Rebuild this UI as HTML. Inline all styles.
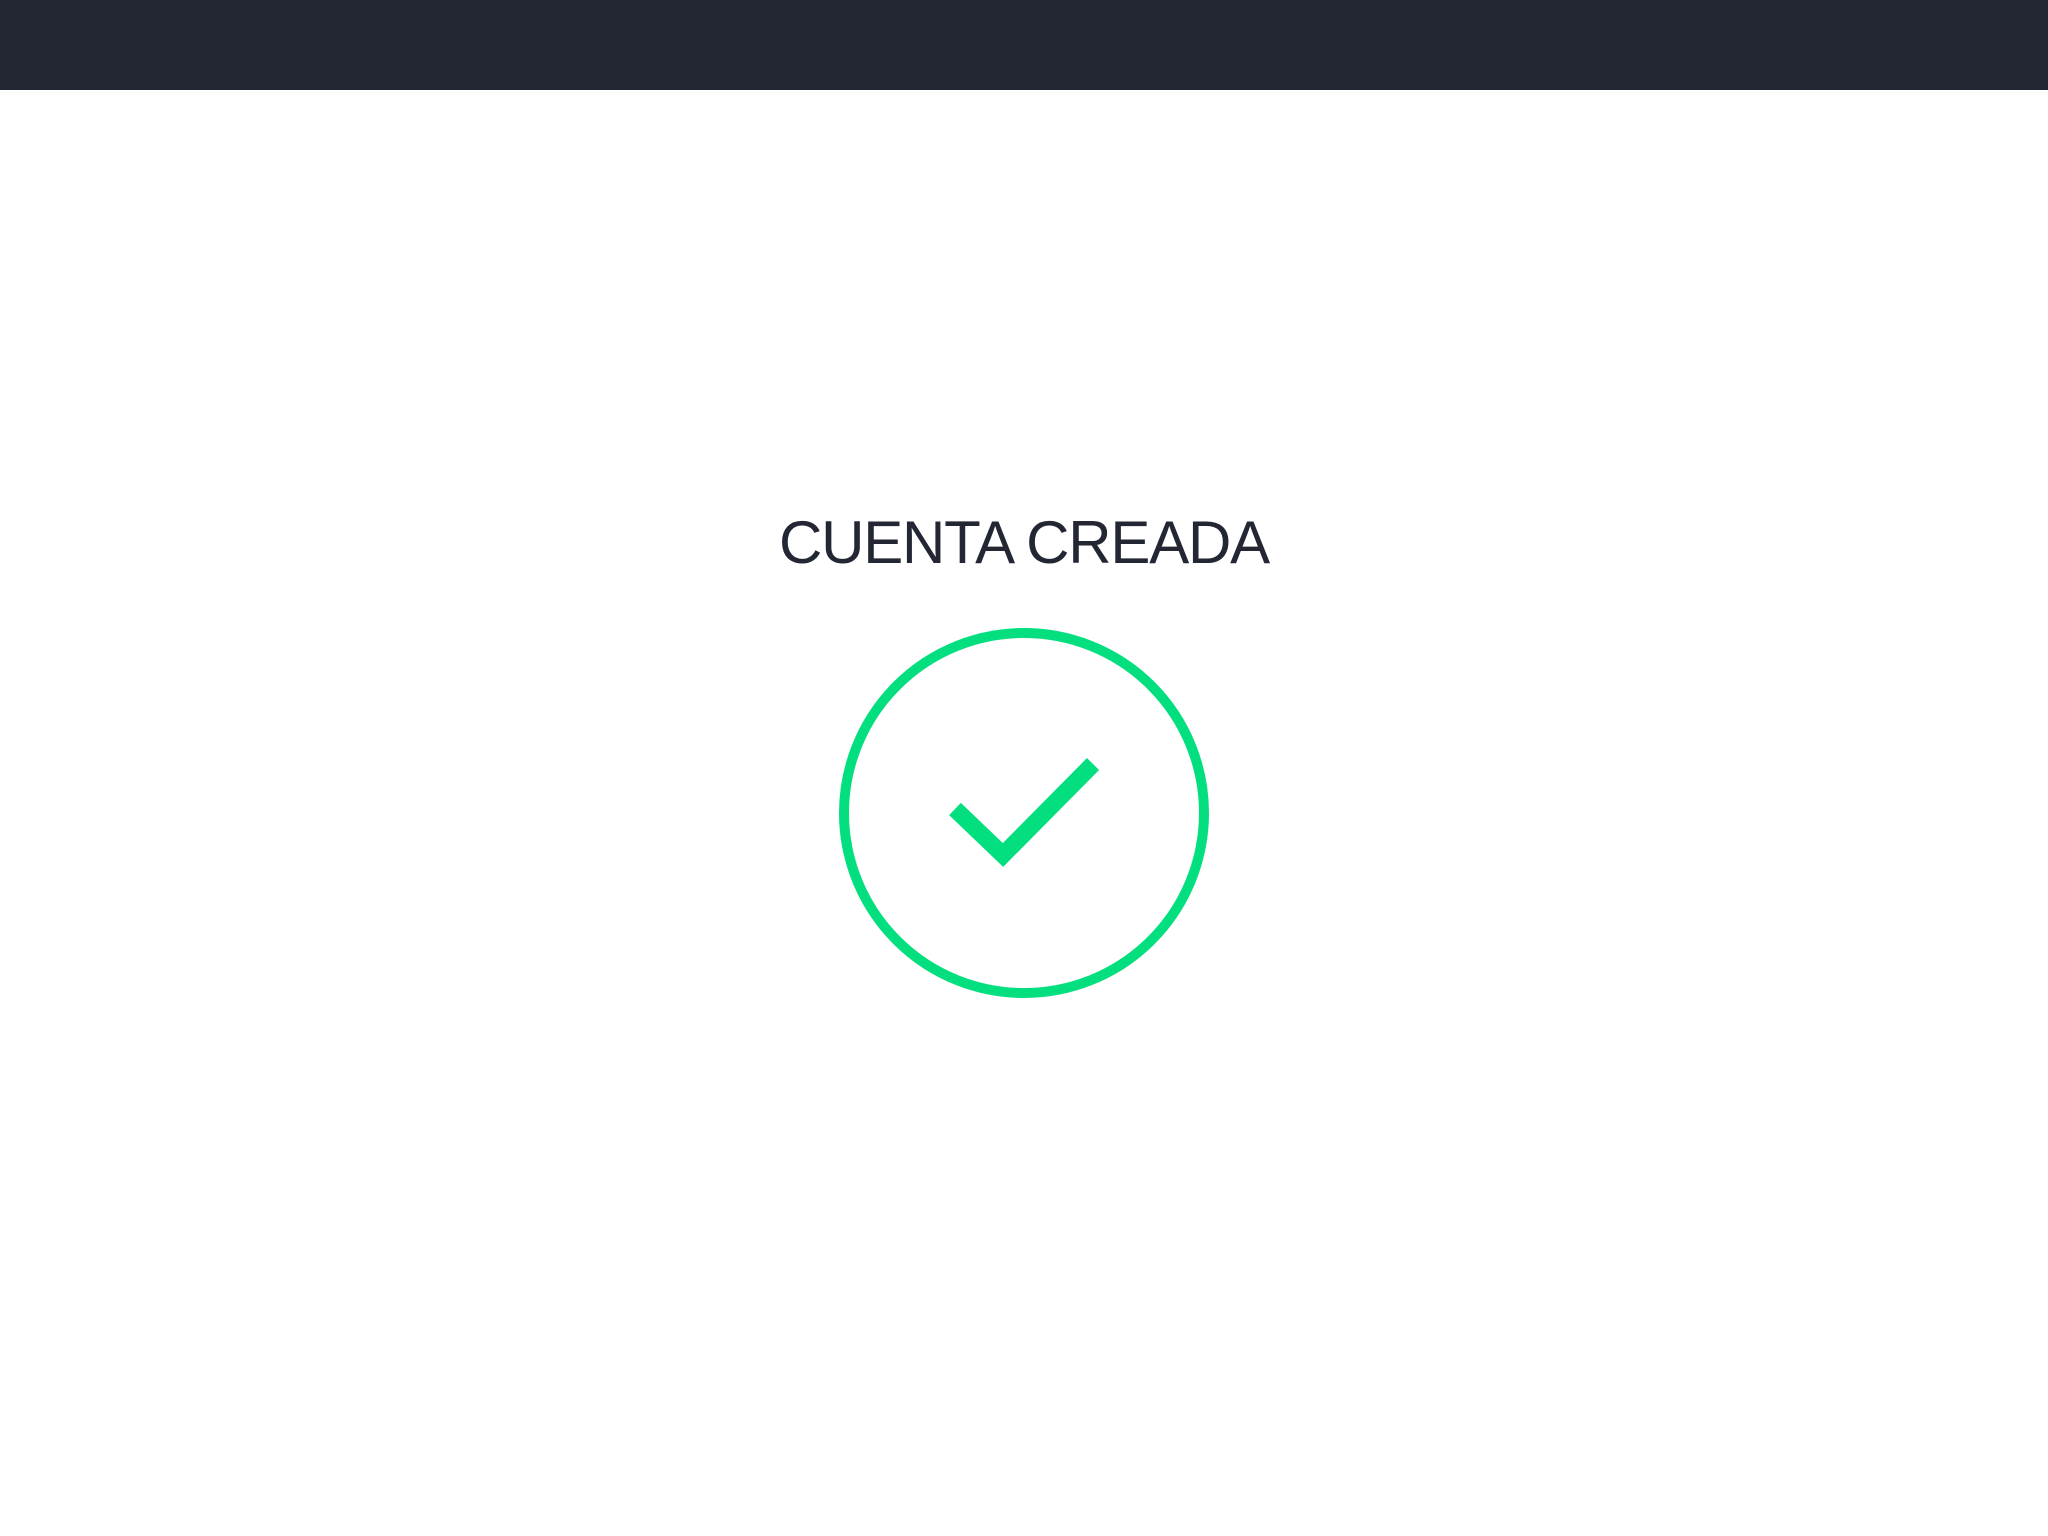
<!DOCTYPE html>
<html><head><meta charset="utf-8"><style>
html,body{margin:0;padding:0;width:2048px;height:1536px;background:#fff;overflow:hidden}
.top{position:absolute;left:0;top:0;width:2048px;height:90px;background:#232733}
.t{position:absolute;left:0;width:2048px;top:508px;text-align:center;font-family:"Liberation Sans",sans-serif;font-size:60px;line-height:70px;color:#232733;letter-spacing:-1.2px}
svg{position:absolute;left:0;top:0}
</style></head><body>
<div class="top"></div>
<div class="t">CUENTA CREADA</div>
<svg width="2048" height="1536">
<circle cx="1024" cy="813" r="180" fill="none" stroke="#03df7e" stroke-width="10"/>
<polyline points="955,809 1003,855 1093,764" fill="none" stroke="#03df7e" stroke-width="17" stroke-linecap="butt" stroke-linejoin="miter"/>
</svg>
</body></html>
